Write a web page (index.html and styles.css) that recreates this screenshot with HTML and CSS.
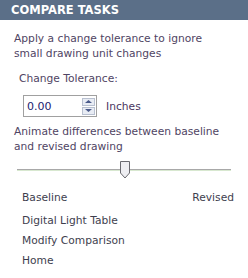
FILE: index.html
```html
<!DOCTYPE html>
<html>
<head>
<meta charset="utf-8">
<link rel="stylesheet" href="styles.css">
</head>
<body>
<div class="panel">
  <div class="header">COMPARE TASKS</div>
  <p class="desc">Apply a change tolerance to ignore small drawing unit changes</p>
  <div class="label">Change Tolerance:</div>
  <div class="tol-row">
    <div class="spin">
      <span class="spin-val">0.00</span>
      <span class="spin-btns">
        <span class="spin-btn"><svg width="9" height="5" viewBox="0 0 9 5"><path d="M1 4 L4.5 1 L8 4 Z" fill="#4a5a8a"/></svg></span>
        <span class="spin-btn"><svg width="9" height="5" viewBox="0 0 9 5"><path d="M1 1 L4.5 4 L8 1 Z" fill="#4a5a8a"/></svg></span>
      </span>
    </div>
    <span class="unit">Inches</span>
  </div>
  <p class="desc desc2">Animate differences between baseline and revised drawing</p>
  <div class="slider">
    <div class="track"></div>
    <svg class="thumb" width="12" height="18" viewBox="0 0 12 18">
      <path d="M1.5 0.5 H10.5 V12 L6 17 L1.5 12 Z" fill="#eeeef2" stroke="#6a6a70"/>
    </svg>
  </div>
  <div class="ends"><span>Baseline</span><span>Revised</span></div>
  <ul class="links">
    <li>Digital Light Table</li>
    <li>Modify Comparison</li>
    <li>Home</li>
  </ul>
</div>
</body>
</html>
```
FILE: styles.css
```css
html, body { margin: 0; padding: 0; background: #fff; }
body { width: 248px; height: 278px; overflow: hidden; font-family: "DejaVu Sans", Verdana, sans-serif; }
.panel { display: flex; flex-direction: column; }
.header {
  height: 20px;
  background: #5b6f88;
  color: #fff;
  font-weight: bold;
  font-size: 11.5px;
  line-height: 21px;
  padding-left: 11px;
}
.desc {
  margin: 11px 0 0 14px;
  font-size: 10.7px;
  line-height: 15px;
  color: #4f4463;
  width: 205px;
}
.label {
  margin: 10px 0 0 19px;
  font-size: 10.7px;
  line-height: 15px;
  color: #4f4463;
}
.tol-row {
  display: flex;
  align-items: center;
  margin: 9px 0 0 23px;
  gap: 9px;
}
.spin {
  width: 72px;
  height: 20px;
  border: 1px solid #a0a0a0;
  display: flex;
  align-items: center;
  justify-content: space-between;
  box-sizing: content-box;
}
.spin-val {
  font-size: 11px;
  color: #1c1c70;
  padding-left: 3px;
}
.spin-btns {
  display: flex;
  flex-direction: column;
  gap: 1px;
  margin-right: 1px;
}
.spin-btn {
  width: 13px;
  height: 8px;
  border: 1px solid #b8c0d0;
  background: #e8ecf4;
  display: flex;
  align-items: center;
  justify-content: center;
  box-sizing: border-box;
}
.unit {
  font-size: 10.7px;
  color: #4a3660;
}
.desc2 { margin-top: 7px; width: 225px; }
.slider {
  position: relative;
  height: 20px;
  margin: 7px 0 0 17px;
  width: 214px;
}
.track {
  position: absolute;
  left: 0; right: 0; top: 8px;
  height: 2px;
  background: linear-gradient(#a8a8a8 0 1px, #d8e8d0 1px 2px);
}
.thumb { position: absolute; left: 102px; top: 0; }
.ends {
  display: flex;
  justify-content: space-between;
  margin: 10px 14px 0 22px;
  font-size: 10.7px;
  color: #3e3e4e;
  line-height: 14px;
}
.links {
  list-style: none;
  margin: 6px 0 0 22px;
  padding: 0;
  font-size: 10.7px;
  color: #3e3e4e;
}
.links li { line-height: 20px; }
```
